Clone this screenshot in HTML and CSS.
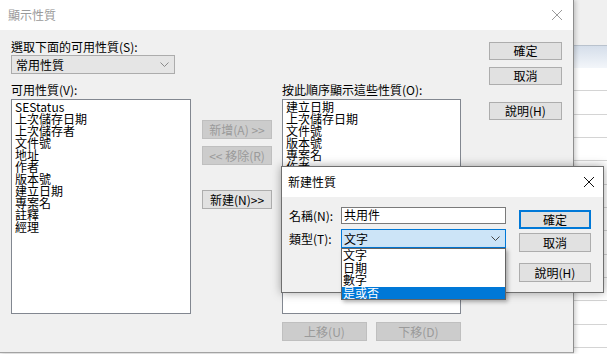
FILE: index.html
```html
<!DOCTYPE html>
<html lang="zh-Hant">
<head>
  <meta charset="UTF-8" />
  <title>顯示性質</title>
  <link rel="stylesheet" href="styles.css">
</head>
<body>
  <div class="main">
    <div class="titlebar">
      <span class="title title-inactive">顯示性質</span>
      <svg class="close" width="10" height="10" viewBox="0 0 10 10"><path d="M0 0L10 10M10 0L0 10" stroke="#9a9a9a" stroke-width="1" fill="none"/></svg>
    </div>

    <div class="main-body">
      <div class="col-left">
        <div class="label label-top">選取下面的可用性質(S):</div>
        <div class="select">
          <span>常用性質</span>
          <svg width="9" height="5" viewBox="0 0 9 5"><path d="M0.5 0.5L4.5 4.5L8.5 0.5" fill="none" stroke="#8a8a8a"/></svg>
        </div>
        <div class="label label-list">可用性質(V):</div>
        <div class="listbox">
          <div>SEStatus</div>
          <div>上次儲存日期</div>
          <div>上次儲存者</div>
          <div>文件號</div>
          <div>地址</div>
          <div>作者</div>
          <div>版本號</div>
          <div>建立日期</div>
          <div>專案名</div>
          <div>註釋</div>
          <div>經理</div>
        </div>
      </div>

      <div class="col-mid">
        <button class="btn" disabled>新增(A) &gt;&gt;</button>
        <button class="btn" disabled>&lt;&lt; 移除(R)</button>
        <button class="btn btn-new">新建(N)&gt;&gt;</button>
      </div>

      <div class="col-right">
        <div class="label label-list-right">按此順序顯示這些性質(O):</div>
        <div class="listbox">
          <div>建立日期</div>
          <div>上次儲存日期</div>
          <div>文件號</div>
          <div>版本號</div>
          <div>專案名</div>
          <div>作者</div>
        </div>
        <div class="move-row">
          <button class="btn" disabled>上移(U)</button>
          <button class="btn" disabled>下移(D)</button>
        </div>
      </div>

      <div class="col-buttons">
        <button class="btn btn-side">確定</button>
        <button class="btn btn-side">取消</button>
        <button class="btn btn-side btn-help">說明(H)</button>
      </div>
    </div>
  </div>

  <div class="backdrop-window">
    <div class="bw-top"></div>
    <div class="bw-header"></div>
    <div class="bw-rows"></div>
  </div>

  <div class="new-dialog">
    <div class="titlebar titlebar-small">
      <span class="title">新建性質</span>
      <svg class="close" width="10" height="10" viewBox="0 0 10 10"><path d="M0 0L10 10M10 0L0 10" stroke="#111" stroke-width="1" fill="none"/></svg>
    </div>
    <div class="nd-body">
      <div class="nd-fields">
        <div class="nd-row">
          <span class="nd-label">名稱(N):</span>
          <div class="textbox">共用件</div>
        </div>
        <div class="nd-row nd-row-type">
          <span class="nd-label">類型(T):</span>
          <div class="select select-focus">
            <span>文字</span>
            <svg width="9" height="5" viewBox="0 0 9 5"><path d="M0.5 0.5L4.5 4.5L8.5 0.5" fill="none" stroke="#444"/></svg>
            <div class="dropdown">
              <div>文字</div>
              <div>日期</div>
              <div>數字</div>
              <div class="selected">是或否</div>
            </div>
          </div>
        </div>
      </div>
      <div class="nd-buttons">
        <button class="btn btn-side btn-default">確定</button>
        <button class="btn btn-side">取消</button>
        <button class="btn btn-side btn-help-small">說明(H)</button>
      </div>
    </div>
  </div>
</body>
</html>
```

FILE: styles.css
```css
* {
  box-sizing: border-box;
}

body {
  margin: 0;
  width: 607px;
  height: 354px;
  overflow: hidden;
  display: flex;
  align-items: flex-start;
  position: relative;
  background: #f0f0f0;
  font-family: "Noto Sans CJK TC", "Liberation Sans", sans-serif;
  font-size: 12px;
  color: #000;
}

.main {
  width: 574px;
  height: 353px;
  background: #f0f0f0;
  border-right: 1px solid #8e8e8e;
  border-bottom: 1px solid #a3a3a3;
  box-shadow: 2px 0 4px rgba(0, 0, 0, 0.18);
  position: relative;
  z-index: 1;
}

.titlebar {
  height: 30px;
  background: #ffffff;
  display: flex;
  align-items: center;
  justify-content: space-between;
  padding: 0 11px 1px 8px;
}

.title {
  font-size: 12px;
  line-height: 14px;
}

.title-inactive {
  color: #9a9a9a;
}

.main-body {
  display: flex;
  padding-left: 11px;
}

.label {
  line-height: 14px;
  height: 14px;
  white-space: nowrap;
}

.label-top {
  margin-top: 10px;
}

.label-list {
  margin-top: 9px;
}

.label-list-right {
  margin-top: 53px;
}

.col-left {
  width: 180px;
}

.select {
  height: 19px;
  width: 164px;
  background: #e5e5e5;
  border: 1px solid #acacac;
  margin-top: 1px;
  display: flex;
  align-items: center;
  justify-content: space-between;
  padding: 0 5px 0 4px;
  line-height: 14px;
}

.listbox {
  margin-top: 2px;
  height: 215px;
  background: #ffffff;
  border: 1px solid #828790;
  padding: 1px 3px;
  line-height: 12px;
  overflow: hidden;
}

.listbox div {
  height: 12px;
  white-space: nowrap;
}

.col-mid {
  width: 70px;
  margin-left: 11px;
  padding-top: 90px;
  display: flex;
  flex-direction: column;
  gap: 7px;
}

.btn {
  font-family: inherit;
  font-size: 12px;
  line-height: 14px;
  height: 19px;
  padding: 0;
  margin: 0;
  background: #e1e1e1;
  border: 1px solid #adadad;
  color: #000;
  white-space: nowrap;
}

.btn:disabled {
  background: #cccccc;
  border-color: #bfbfbf;
  color: #9a9a9a;
}

.btn-new {
  margin-top: 18px;
}

.col-right {
  width: 179px;
  margin-left: 10px;
}

.move-row {
  margin-top: 8px;
  display: flex;
  gap: 9px;
}

.move-row .btn {
  width: 85px;
}

.col-buttons {
  width: 73px;
  margin-left: 28px;
  padding-top: 12px;
  display: flex;
  flex-direction: column;
  gap: 7px;
}

.btn-side {
  height: 18px;
}

.btn-help {
  margin-top: 10px;
}

/* window behind the dialog */
.backdrop-window {
  flex: 1;
  height: 354px;
  background: #ffffff;
}

.bw-top {
  height: 45px;
  background: #f0f0f0;
}

.bw-header {
  height: 23px;
  border-top: 1px solid #b9c2cd;
  background: linear-gradient(#d5deea, #f3f6fa);
}

.bw-rows {
  height: 286px;
  background: repeating-linear-gradient(to bottom, #ffffff 0, #ffffff 22.33px, #d4d4d4 22.33px, #d4d4d4 23.33px);
}

/* nested dialog */
.new-dialog {
  position: absolute;
  left: 281px;
  top: 166px;
  width: 323px;
  height: 127px;
  background: #f0f0f0;
  border: 1px solid #6f6f6f;
  box-shadow: 0 0 9px rgba(0, 0, 0, 0.35);
  z-index: 2;
}

.titlebar-small {
  height: 30px;
  padding: 0 9px 0 6px;
}

.nd-body {
  display: flex;
  padding-left: 7px;
}

.nd-fields {
  width: 217px;
  padding-top: 10px;
}

.nd-row {
  display: flex;
  align-items: center;
}

.nd-row-type {
  margin-top: 5px;
}

.nd-label {
  width: 52px;
  line-height: 14px;
}

.textbox {
  width: 165px;
  height: 17px;
  background: #ffffff;
  border: 1px solid #7a7a7a;
  padding-left: 2px;
  line-height: 14px;
}

.select-focus {
  width: 165px;
  margin-top: 0;
  background: #cce4f7;
  border-color: #0078d7;
  position: relative;
  padding-left: 2px;
}

.dropdown {
  position: absolute;
  left: -1px;
  top: 18px;
  width: 165px;
  background: #ffffff;
  border: 1px solid #646464;
  box-shadow: 2px 2px 4px rgba(0, 0, 0, 0.3);
  line-height: 12.5px;
}

.dropdown div {
  height: 12.5px;
  padding-left: 1px;
}

.dropdown .selected {
  background: #0078d7;
  color: #ffffff;
}

.nd-buttons {
  width: 72px;
  margin-left: 13px;
  padding-top: 13px;
  display: flex;
  flex-direction: column;
  gap: 4px;
}

.nd-buttons .btn-side {
  height: 19px;
}

.btn-default {
  border: 2px solid #0078d7;
}

.btn-help-small {
  margin-top: 7px;
}
```
